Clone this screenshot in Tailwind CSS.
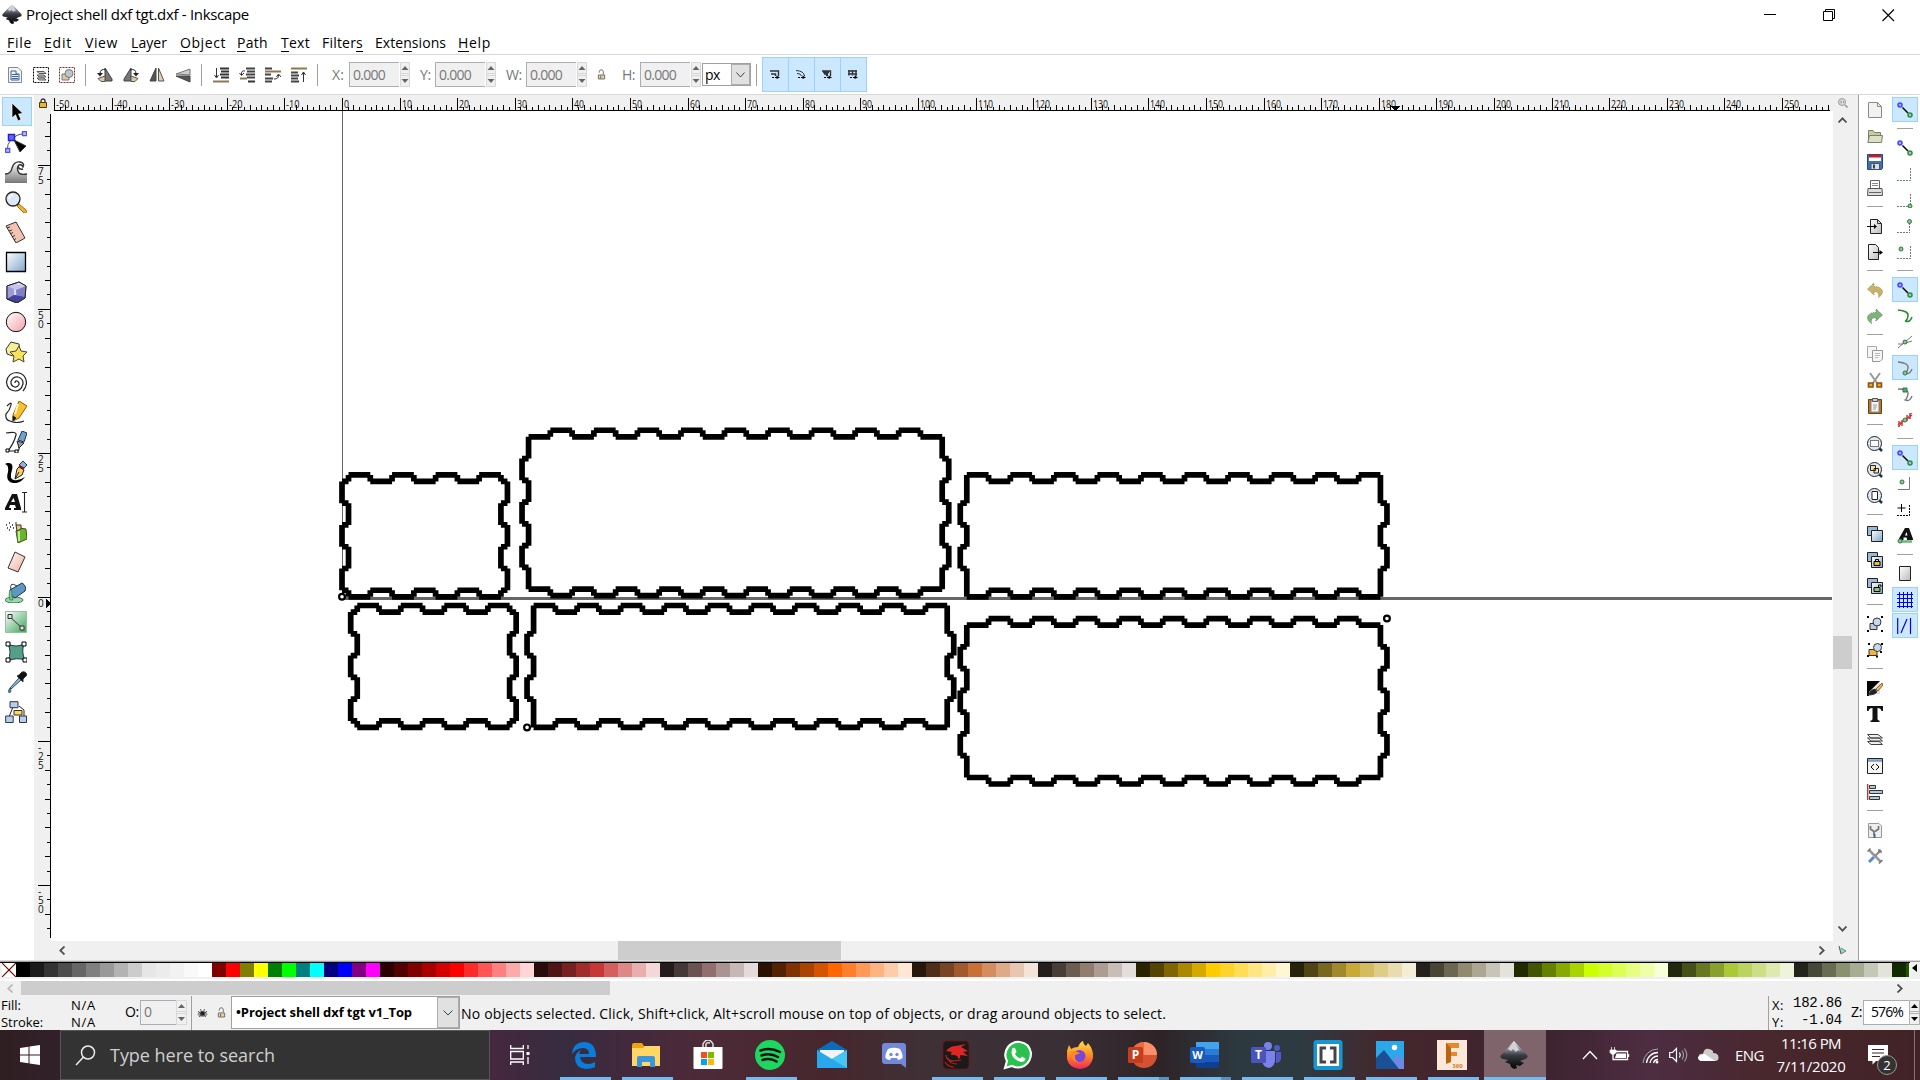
<!DOCTYPE html>
<html lang="en">
<head>
<meta charset="utf-8">
<title>Project shell dxf tgt.dxf - Inkscape</title>
<script src="https://cdn.jsdelivr.net/npm/@tailwindcss/browser@4"></script>
</head>
<body class="w-[1920px] h-[1080px] overflow-hidden bg-white text-black font-['Open_Sans','Noto_Sans',sans-serif] text-[14px] leading-none">
<svg class="absolute w-0 h-0">
  <linearGradient id="gBlue" x1="0" y1="0" x2="1" y2="1"><stop stop-color="#fff"/><stop offset="1" stop-color="#7fa6cc"/></linearGradient>
  <linearGradient id="gGrey" x1="0" y1="0" x2="1" y2="1"><stop stop-color="#fff"/><stop offset="1" stop-color="#bbb"/></linearGradient>
  <linearGradient id="gDark" x1="0" y1="0" x2="0" y2="1"><stop stop-color="#f4f4f8"/><stop offset=".5" stop-color="#3a3e44"/><stop offset="1" stop-color="#000"/></linearGradient>
  <linearGradient id="gPink" x1="0" y1="0" x2="1" y2="1"><stop stop-color="#fff"/><stop offset="1" stop-color="#f5a0aa"/></linearGradient>
  <linearGradient id="gPeach" x1="0" y1="0" x2="1" y2="1"><stop stop-color="#fff"/><stop offset="1" stop-color="#f0ab94"/></linearGradient>
  <linearGradient id="gGreen" x1="0" y1="0" x2="1" y2="1"><stop stop-color="#fff"/><stop offset="1" stop-color="#3fa25b"/></linearGradient>
  <linearGradient id="gWave" x1="0" y1="0" x2="0" y2="1"><stop stop-color="#fff"/><stop offset="1" stop-color="#777"/></linearGradient>
  <linearGradient id="gFox" x1="0" y1="0" x2="0" y2="1"><stop stop-color="#ffe14a"/><stop offset=".5" stop-color="#ff8a22"/><stop offset="1" stop-color="#f0285a"/></linearGradient>
  <symbol id="inkscape" viewBox="0 0 28 28"><path d="M14 0 1 14Q-1 17 3 18L8 19 5 21 10 23 11 26 14 28 17 27 16 24 20 25 24 22 20 20 25 18Q29 17 27 14Z" fill="url(#gDark)"/><path d="M14 1 8 8 11 10 13 8 16 11 18 9 20 10Z" fill="#cfd2d8"/></symbol>
  <symbol id="snap" viewBox="0 0 16 16"><path d="M5.500 5.500 11 11" stroke="#000" stroke-width="1.500"/><path d="M11.500 11.500V7.500L7.500 11.500Z"/><circle cx="3" cy="3" r="2" fill="#aaf" stroke="#44f" stroke-width="1.500"/><circle cx="13" cy="13" r="2" fill="#9cd0aa" stroke="#2b8a44" stroke-width="1.500"/></symbol>
  <symbol id="lock" viewBox="0 0 10 10"><path d="M3 5V3a2 2 0 0 1 4 0V5" fill="none" stroke="#333" stroke-width="1.300"/><path d="M1.500 4.500h7v5h-7z" fill="#e9b530" stroke="#4a3a10"/></symbol>
  <symbol id="unlock" viewBox="0 0 10 12"><path d="M2.500 4V3a2.200 2.200 0 0 1 4.500 0V6" fill="none" stroke="#666"/><path d="M1.500 6.500h7v4.500h-7z" fill="#e0d49a" stroke="#666"/><path d="M4 7.500v3" stroke="#666"/></symbol>
</svg>

<div class="flex flex-col h-[1080px]">
  <!-- title bar -->
  <header class="flex items-center h-[30px] shrink-0">
    <svg class="w-[20px] h-[20px] ml-[2px] -mt-[2px]"><use href="#inkscape"/></svg>
    <span class="ml-[4px] -mt-[2px] text-[15px] whitespace-nowrap" data-w="223">Project shell dxf tgt.dxf - Inkscape</span>
    <div class="ml-auto flex items-center gap-[46px] pr-[25px]">
      <svg class="w-[13px] h-[13px]" viewBox="0 0 13 13"><path d="M0 5.500H12" stroke="#000"/></svg>
      <svg class="w-[13px] h-[13px]" viewBox="0 0 13 13" fill="none" stroke="#000"><path d="M.5 2.500h9v9h-9zM2.500 2.500V.5h9v9h-2"/></svg>
      <svg class="w-[13px] h-[13px]" viewBox="0 0 13 13"><path d="M.5.5 12 12M12 .5.5 12" stroke="#000" stroke-width="1.100"/></svg>
    </div>
  </header>
  <nav id="menu" class="flex items-center h-[25px] shrink-0 pl-[7px] pt-[1px] border-b border-[#d9d9d9]"></nav>

  <!-- tool controls -->
  <div id="controls" class="flex items-center h-[40px] shrink-0 pl-[2px] border-b border-[#d9d9d9] text-[#777]"></div>

  <!-- work area -->
  <main class="flex h-[866px] shrink-0">
    <div id="tools" class="w-[34px] flex flex-col items-center pt-[2px] border-b border-[#d9d9d9]"></div>
    <div class="w-[1824px] flex flex-col bg-[#f0f0f0]">
      <div class="flex h-[16px]">
        <div class="w-[20px] flex justify-center pt-[3px]"><svg class="w-[10px] h-[10px] -ml-[2px]"><use href="#lock"/></svg></div>
        <svg id="hruler" class="w-[1779px] h-[16px]" viewBox="54 95 1779 16" shape-rendering="crispEdges"></svg>
        <svg class="w-[10px] h-[10px] mt-[3px] ml-[5px]" viewBox="0 0 10 10" fill="none" stroke="#999"><circle cx="4" cy="4" r="3.500" fill="#ddd"/><path d="M7 7 9.500 9.500" stroke-width="1.600"/><path d="M3 2.500v3M5.500 3v2"/></svg>
      </div>
      <div class="flex h-[830px]">
        <svg id="vruler" class="w-[17px] h-[830px]" viewBox="34 111 17 830" shape-rendering="crispEdges"></svg>
        <svg id="canvas" class="w-[1782px] h-[830px] bg-white" viewBox="51 111 1782 830"></svg>
        <div class="w-[19px] flex flex-col items-center">
          <svg class="w-[9px] h-[6px] mt-[6px]" viewBox="0 0 9 6"><path d="M.5 5.500 4.500 1.300 8.500 5.500" fill="none" stroke="#505050" stroke-width="1.800"/></svg>
          <div class="w-[19px] h-[33px] bg-[#cdcdcd] mt-[513px]"></div>
          <svg class="w-[9px] h-[6px] mt-[257px]" viewBox="0 0 9 6"><path d="M.5.5 4.500 4.700 8.500.5" fill="none" stroke="#505050" stroke-width="1.800"/></svg>
        </div>
      </div>
      <div class="flex items-center h-[19px] pl-[25px]">
        <svg class="w-[6px] h-[9px]" viewBox="0 0 6 9"><path d="M5.500.5 1.300 4.500 5.500 8.500" fill="none" stroke="#505050" stroke-width="1.800"/></svg>
        <div class="w-[223px] h-[19px] bg-[#cdcdcd] ml-[553px]"></div>
        <svg class="w-[6px] h-[9px] ml-[978px]" viewBox="0 0 6 9"><path d="M.5.5 4.700 4.500.5 8.500" fill="none" stroke="#505050" stroke-width="1.800"/></svg>
        <svg class="w-[9px] h-[9px] ml-[13px]" viewBox="0 0 9 9"><path d="M1 1 8 5 3 8Z" fill="#8db"/><path d="M1 0 3 8" stroke="#555"/><path d="M3 2 8 5" stroke="#4a8"/><path d="M3 8 8 5" stroke="#c57"/></svg>
      </div>
      <div class="h-px bg-[#dcdcdc]"></div>
    </div>
    <div class="w-[62px] flex border-l border-[#a0a0a0] border-b border-b-[#d9d9d9] pt-[2px]">
      <div id="cmds" class="w-[32px] flex flex-col items-center"></div>
      <div id="snaps" class="w-[28px] flex flex-col items-center"></div>
    </div>
  </main>

  <!-- palette -->
  <div class="flex h-[17px] shrink-0 bg-[#f0f0f0] border-t border-[#a0a0a0]">
    <div id="palette" class="flex w-[1910px] h-[15px] border-t border-black pl-[2px] overflow-hidden"></div>
    <svg class="w-[6px] h-[8px] mt-[2px] ml-[2px]" viewBox="0 0 6 8"><path d="M5 0V8L0 4Z"/></svg>
  </div>
  <div class="h-[3px] shrink-0 bg-white border-t border-[#f0f0f0]"></div>
  <div class="flex items-center h-[14px] shrink-0 bg-[#f0f0f0] pl-[7px]">
    <svg class="w-[6px] h-[9px]" viewBox="0 0 6 9"><path d="M5.500.5 1.300 4.500 5.500 8.500" fill="none" stroke="#bbb" stroke-width="1.800"/></svg>
    <div class="w-[589px] h-[14px] bg-[#cdcdcd] ml-[8px]"></div>
    <svg class="w-[6px] h-[9px] ml-[1287px]" viewBox="0 0 6 9"><path d="M.5.5 4.700 4.500.5 8.500" fill="none" stroke="#505050" stroke-width="1.800"/></svg>
  </div>

  <!-- status bar -->
  <div class="flex h-[35px] shrink-0 bg-[#f0f0f0] whitespace-nowrap">
    <div class="w-[124px] grid grid-cols-[70px_54px] grid-rows-[17px_17px] items-center pl-[1px] text-[13px] pt-[2px]">
      <span data-w="20">Fill:</span><span data-w="25">N/A</span><span data-w="42">Stroke:</span><span data-w="25">N/A</span>
    </div>
    <div class="w-[67px] flex items-center pb-[1px]">
      <span class="w-[16px] pl-[1px]"><span data-w="14">O:</span></span>
      <div class="w-[36px] h-[25px] border border-[#a9adb5] border-r-0 flex items-center pl-[3px] text-[#777]">0</div>
      <svg class="w-[11px] h-[25px]" viewBox="0 0 11 25"><path d="M.5.5h10v24H.5zM.5 11.500h10M.5 13.500h10" fill="#f0f0f0" stroke="#d8d8d8"/><path d="M2 8h7L5.500 4zM2 17h7L5.500 21z" fill="#666"/></svg>
    </div>
    <div class="w-px bg-[#a0a0a0] mt-[1px]"></div>
    <div class="w-[39px] flex items-center pl-[5px] gap-[8px]">
      <svg class="w-[11px] h-[10px]" viewBox="0 0 11 10"><ellipse cx="5.500" cy="6" rx="5" ry="3" fill="#999"/><circle cx="5.500" cy="5.500" r="2.300" fill="#222"/><path d="M1 3 3 5M3.500 1l1 3M7.500 1l-1 3M10 3 8 5M2 9 4 7M9 9 7 7" stroke="#444" stroke-width=".8"/></svg>
      <svg class="w-[9px] h-[11px] ml-[1px]"><use href="#unlock"/></svg>
    </div>
    <div class="w-[229px] h-[33px] mt-[1px] border border-[#a0a0a0] bg-white flex items-center">
      <span class="pl-[4px] w-[205px] font-bold text-[13px]"><span data-w="176">•Project shell dxf tgt v1_Top</span></span>
      <div class="w-[22px] h-[31px] bg-[#e1e1e1] border border-[#adadad] flex items-center justify-center"><svg class="w-[10px] h-[6px]" viewBox="0 0 10 6"><path d="M.5.5 5 5 9.500.5" fill="none" stroke="#444"/></svg></div>
    </div>
    <span class="w-[1309px] pl-[1px] pt-[12px]"><span data-w="705">No objects selected. Click, Shift+click, Alt+scroll mouse on top of objects, or drag around objects to select.</span></span>
    <div class="w-px bg-[#a0a0a0] -ml-[1px] mt-[1px]"></div>
    <div class="w-[73px] grid grid-cols-[20px_50px] grid-rows-[17px_17px] items-center pl-[3px] pt-[1px]">
      <span class="text-[13px] pt-[2px]"><span data-w="12">X:</span></span><span class="font-['Liberation_Mono',monospace] text-[14px] text-right -mt-[3px]"><span data-w="49">182.86</span></span>
      <span class="text-[13px] pt-[2px]"><span data-w="12">Y:</span></span><span class="font-['Liberation_Mono',monospace] text-[14px] text-right -mt-[3px]"><span data-w="41">-1.04</span></span>
    </div>
    <div class="flex items-center pl-[9px] pb-[1px]">
      <span class="w-[12px]"><span data-w="11">Z:</span></span>
      <div class="w-[46px] h-[25px] border border-[#a9adb5] border-r-0 bg-white flex items-center pl-[7px]"><span data-w="32">576%</span></div>
      <svg class="w-[11px] h-[25px]" viewBox="0 0 11 25"><path d="M.5.5h10v24H.5zM.5 11.500h10M.5 13.500h10" fill="#f0f0f0" stroke="#b0b0b0"/><path d="M2 8h7L5.500 4zM2 17h7L5.500 21z"/></svg>
    </div>
  </div>

  <!-- taskbar -->
  <footer class="flex h-[50px] shrink-0 text-white bg-[linear-gradient(90deg,#2f1f22_0px,#32202a_60px,#46273e_490px,#372c40_560px,#43293c_630px,#4c2a38_700px,#47272d_830px,#3d3136_930px,#3a2f35_1060px,#2e2428_1160px,#2d3940_1240px,#2e3a42_1300px,#45262c_1390px,#3e2430_1550px,#4d2d42_1650px,#48272d_1770px,#412327_1920px)]">
    <div class="w-[60px] flex items-center justify-center"><svg class="w-[20px] h-[20px]" viewBox="0 0 20 20" fill="#fff"><path d="M0 3 8.500 1.700V9.500H0zM9.500 1.600 20 0V9.500H9.500zM0 10.500H8.500V18.300L0 17zM9.500 10.500H20V20L9.500 18.400z"/></svg></div>
    <div class="w-[430px] bg-[#333] border border-[#565656] flex items-center pl-[14px]">
      <svg class="w-[21px] h-[21px]" viewBox="0 0 21 21" fill="none" stroke="#eee" stroke-width="1.500"><circle cx="13" cy="7.500" r="6.500"/><path d="M8.500 12 1 20"/></svg>
      <span class="ml-[14px] text-[18px] text-[#cfcfcf] whitespace-nowrap -mt-[1px]" data-w="165">Type here to search</span>
    </div>
    <div class="w-[64px] flex items-center pl-[20px]"><svg class="w-[20px] h-[20px]" viewBox="0 0 20 20" fill="none" stroke="#fff" stroke-width="1.300"><path d="M.7 0V3.500H13.300V0M.7 6.500H13.300V14H.7zM.7 20V17H13.300V20M18 0V4M18 12V19"/><path d="M16.500 7h3v3h-3z" fill="#fff" stroke="none"/></svg></div>
    <div id="apps" class="flex"></div>
    <div class="flex items-center w-[188px] pl-[36px]">
      <svg class="w-[16px] h-[10px]" viewBox="0 0 16 10"><path d="M1 9 8 1.500 15 9" fill="none" stroke="#fff" stroke-width="1.300"/></svg>
      <svg class="w-[21px] h-[16px] ml-[11px]" viewBox="0 0 21 16"><path d="M6.500 4.500h12v8H4V8M19.500 7v3" fill="none" stroke="#fff" stroke-width="1.300"/><path d="M7.500 6.500h9.500v4.500H6z" fill="#fff"/><path d="M1 3h6v2.500L5 7.500H3L1 5.500zM2.500 0V3M5.500 0V3" fill="#fff" stroke="#fff" stroke-width=".7"/></svg>
      <svg class="w-[17px] h-[17px] ml-[12px]" viewBox="0 0 17 17" fill="none" stroke="#fff"><path d="M1 16A15 15 0 0 1 16 2" stroke="#aaa"/><path d="M4.500 16A11.500 11.500 0 0 1 16 5.500M8 16A8 8 0 0 1 16 9M11.500 16A4.500 4.500 0 0 1 16 12.500" stroke-width="1.300"/><circle cx="15" cy="15" r="1.500" fill="#fff" stroke="none"/></svg>
      <svg class="w-[20px] h-[18px] ml-[10px]" viewBox="0 0 20 18" fill="none" stroke="#fff" stroke-width="1.200"><path d="M.7 6.500H3.500L7.500 2.500V15.500L3.500 11.500H.7zM10.500 6.500Q12 9 10.500 11.500"/><path d="M13 4.500Q16 9 13 13.500M15.500 2.500Q20 9 15.500 15.500" stroke="#999"/></svg>
      <svg class="w-[21px] h-[14px] ml-[9px]" viewBox="0 0 21 14"><path d="M5 13Q0 13 .5 9T5 6Q6 0 11 1T15 5Q20 5 20.500 9T17 13Z" fill="#ccc"/><path d="M0 9 6 5.500 17 13H4Q0 13 0 9Z" fill="#fff"/></svg>
    </div>
    <span class="w-[42px] pt-[18px] text-[15px] pl-[1px] -mr-[1px]"><span data-w="29">ENG</span></span>
    <div class="w-[72px] flex flex-col items-center gap-[8px] pt-[6px] text-[15px] whitespace-nowrap"><span data-w="60">11:16 PM</span><span data-w="69">7/11/2020</span></div>
    <div class="relative w-[68px] pl-[21px] pt-[15px] border-r border-[#8a7175]">
      <svg class="w-[20px] h-[20px]" viewBox="0 0 20 20"><path d="M0 0H20V16H8L4.500 19.500V16H0Z" fill="#fff"/><path d="M4 4.500H16M4 8H16M4 11.500H12" stroke="#412327" stroke-width="1.200"/></svg>
      <div class="absolute left-[30px] top-[25px] w-[20px] h-[20px] rounded-full bg-[#333] border border-[#999] flex items-center justify-center text-[13px]">2</div>
    </div>
  </footer>
</div>

<script>
const $ = id => document.getElementById(id);
const svg = (body, w = 16, cls = 'w-[16px] h-[16px]') => `<svg class="${cls}" viewBox="0 0 ${w} ${w}" fill="none" stroke="#333">${body}</svg>`;

// Menu: [before, mnemonic, after, text width, cell width class]
$('menu').innerHTML = [['','F','ile',25,'w-[37px]'],['','E','dit',28,'w-[41px]'],['','V','iew',33,'w-[46px]'],['','L','ayer',36,'w-[49px]'],['','O','bject',46,'w-[57px]'],['','P','ath',31,'w-[44px]'],['','T','ext',29,'w-[41px]'],['Filter','s','',41,'w-[53px]'],['Exte','n','sions',71,'w-[83px]'],['','H','elp',33,'w-[40px]']]
  .map(([a, m, b, w, c]) => `<span class="${c} shrink-0"><span data-w="${w}">${a}<u class="underline underline-offset-[3px]">${m}</u>${b}</span></span>`).join('');

// Tool controls bar
const sep = '<div class="w-[12px] pl-[5px]"><div class="w-px h-[22px] bg-[#a0a0a0]"></div></div>';
const bar = s => `<div class="w-[26px] flex justify-center">${svg(s)}</div>`;
const spin = '<svg class="w-[11px] h-[25px]" viewBox="0 0 11 25"><path d="M1.500.5h9v24h-9zM1.500 11.500h9M1.500 13.500h9" fill="#f0f0f0" stroke="#d8d8d8"/><path d="M2.500 8h7L6 4zM2.500 17h7L6 21z" fill="#666"/></svg>';
const field = (l, lw, cls) => `<span class="${cls}"><span data-w="${lw}">${l}:</span></span><div class="w-[50px] h-[25px] border border-r-0 border-[#a9adb5] bg-[#f0f0f0] flex items-center pl-[3px]"><span data-w="32">0.000</span></div>${spin}`;
const rows = 'M7 1.500h9M8 4.500h8M7 7.500h9M8 10.500h8';
$('controls').innerHTML =
  bar('<path d="M1.500.5H11L14.500 4V15.500H1.500Z" fill="#f4f4f4" stroke="#888"/><path d="M4 4h5v3h3v6H4zM5 7.500h6M5 9.500h6M5 11.500h6" stroke="#3465a4"/>') +
  bar('<path d="M.5.5h15v15H.5z" stroke="#000" stroke-dasharray="2 1"/><path d="M4 4.500h7l2 2H6zM4 8h7l2 2H6zM4 11h7l2 2H6z" fill="#ccc" stroke="#555"/>') +
  bar('<path d="M.5.5h15v15H.5z" stroke="#803030" stroke-dasharray="2 1"/><path d="M3 7h7v6H3z" fill="#ddc9a0" stroke="#777"/><circle cx="10" cy="6.500" r="4" fill="#bcc4cc" stroke="#777"/>') + sep +
  bar('<path d="M8 9V1L15 12V14H8Z" fill="#777" stroke="#444"/><path d="M1 11.500 8 9V14.500H4Z" fill="#dcc9a0" stroke="#555"/><path d="M9 3Q3 1 3 7" stroke="#222"/><path d="M0 6h6L3 9.500z" fill="#222" stroke="none"/>') +
  bar('<path d="M8 9V1L1 12V14H8Z" fill="#777" stroke="#444"/><path d="M15 11.500 8 9V14.500H12Z" fill="#dcc9a0" stroke="#555"/><path d="M7 3Q13 1 13 7" stroke="#222"/><path d="M10 6h6L13 9.500z" fill="#222" stroke="none"/>') +
  bar('<path d="M7 1V14H1Z" fill="#555" stroke="#444"/><path d="M9.500 1V14H15Z" fill="#e0cfa8" stroke="#555"/>') +
  bar('<path d="M15 2V8L1 7Z" fill="#ccc" stroke="#777"/><path d="M15 15V9L1 9Z" fill="#555" stroke="#444"/>') + sep +
  bar(`<path d="${rows}" stroke="#333" stroke-width="2"/><path d="M0 14.500H16" stroke="#8a7a50" stroke-width="2"/><path d="M3.500 1V10M1.500 8 3.500 11 5.500 8"/>`) +
  bar(`<path d="${rows}" stroke="#444" stroke-width="2"/><path d="M1 11.500H8" stroke="#8a7a50" stroke-width="2"/><path d="M9 14.500H16" stroke-width="2"/><path d="M6 4Q2 3 2.500 8M.5 6 2.500 8.500 5 6"/>`) +
  bar('<path d="M0 1.500h7M0 7.500h6M0 11.500h8M0 14.500h7" stroke="#444" stroke-width="2"/><path d="M0 4.500h16" stroke="#8a7a50" stroke-width="2"/><path d="M9 12Q14 12 13.500 8M11.500 10 13.500 7 16 10"/>') +
  bar('<path d="M0 1.500H16" stroke="#8a7a50" stroke-width="2"/><path d="M0 5.500h7M0 8.500h8M0 11.500h7M0 14.500h8" stroke="#444" stroke-width="2"/><path d="M12.500 15V5M10.500 8 12.500 5 14.500 8"/>') + sep +
  field('X', 12, 'w-[25px] pl-[8px]') + field('Y', 11, 'w-[25px] pl-[10px]') + field('W', 16, 'w-[30px] pl-[10px]') +
  '<div class="w-[28px] flex justify-center"><svg class="w-[9px] h-[11px]"><use href="#unlock"/></svg></div>' + field('H', 13, 'w-[25px] pl-[7px]') +
  '<div class="w-[49px] h-[23px] ml-[1px] border border-[#a0a0a0] bg-white flex text-black"><span class="w-[28px] pl-[2px] pt-[4px] text-[14px]"><span data-w="15">px</span></span><div class="w-[19px] h-[21px] bg-[#e1e1e1] border border-[#adadad] flex items-center justify-center"><svg class="w-[9px] h-[6px]" viewBox="0 0 9 6"><path d="M.5.5 4.500 5 8.500.5" fill="none" stroke="#444"/></svg></div></div>' +
  '<div class="w-[11px] pl-[5px]"><div class="w-px h-[22px] bg-[#a0a0a0]"></div></div>' +
  ['M0 1H8.500V6M1 4H5.500V6', 'M0 .5Q8 1 8.500 6M1 3.500Q5 3.500 5.500 6', 'M0 1H8.500V6M1 2.500H7M2 4H6M4 5.500H6', 'M0 1H9M0 4H9M1 0V5.500M4.500 0V5.500M8 0V6'].map((d, i) =>
    `<div class="w-[27px] h-[35px] -mr-[1px] border border-[#99d1ff] bg-[#cce8ff] flex items-center justify-center"><svg class="w-[10px] h-[9px] -mt-[1px] -ml-[2px]" viewBox="0 0 10 9" fill="none" stroke="#333" stroke-width="${i == 1 ? 1 : 1.4}"><path d="${d}"/><path d="M2 7.500H7" stroke="#000" stroke-width="1" stroke-dasharray="2 1"/><path d="M6.500 5.500V9L10 7.500Z" fill="#000" stroke="none"/></svg></div>`).join('');

// Toolbox, 22px icons
const tools = [
 '<path d="M7 2V17L10.500 13.800 13 20 16 18.500 13.500 13 18 12.500Z" fill="#000" stroke="#fff" stroke-width=".7"/>',
 '<path d="M2 20Q2 5 20 2" stroke="#555"/><path d="M.7 17.500h4v4h-4zM17.500.7h4v4h-4z" fill="#bbf" stroke="#55d" stroke-width="1.300"/><path d="M3.500 3.500h6v6h-6z" fill="#66f" stroke="#22c" stroke-width="1.500"/><path d="M9 9 21 15 15 21Z" fill="#000"/>',
 '<path d="M0 13Q6 13 7 7 9 0 15 1 20 2 18 6 17 3 14 4 11 7 14 12 16 14 22 13V22H0Z" fill="url(#gWave)" stroke="none"/><path d="M0 13Q6 13 7 7 9 0 15 1 20 2 18 6 17 3 14 4 11 7 14 12 16 14 22 13M13 6Q15 9 18 8" stroke="#333" stroke-width="1.400"/>',
 '<path d="M14 13 21 19Q23 22 19 22L12 15Z" fill="#f5b428" stroke="#a86a10"/><circle cx="8" cy="8" r="7" fill="#dce9f5" stroke="#222" stroke-width="1.300"/><path d="M4 8Q4 4 8 4" stroke="#fff" stroke-width="1.500"/>',
 '<path d="M1 5 11 1 20 17 11 22Z" fill="#f3c3b2" stroke="#333"/><path d="M2 7 5 6M4 10 7 9M5 13 8 11.500M7 16 10 14.500M9 19 11 17.500" stroke="#333"/>',
 '<path d="M1.500 1.500h19v19h-19z" fill="url(#gBlue)" stroke="#000" stroke-width="1.300"/>',
 '<path d="M2 5 14 1 21 5 20 17 12 22 2 18Z" fill="#6d6dbd" stroke="#222"/><path d="M2 5 9 3V14L2 18Z" fill="#9c9cd8" stroke="none"/><path d="M9 3 14 1 21 5 20 14 9 14Z" fill="#dcdcf6" stroke="none"/><path d="M2 5 9 3 21 5 11 9Z" fill="#c4c4ec" stroke="none"/><path d="M11 9 21 5 20 17 12 22Z" fill="#8080c8" stroke="none"/><path d="M2 18 9 14 20 16 12 22Z" fill="#44449a" stroke="none"/><path d="M2 5 14 1 21 5 20 17 12 22 2 18Z" stroke="#222"/>',
 '<circle cx="11" cy="11" r="9.700" fill="url(#gPink)" stroke="#111"/>',
 '<path d="M1 8 6 1 14 3 15 11 8 15 2 13Z" fill="#f6ef9a" stroke="#333"/><path d="M14 5 16 10 22 11 18 15 19 21 14 18 8 21 9 15 5 11 11 10Z" fill="#fae25a" stroke="#443"/>',
 '<path d="M10 12Q10 9.500 12 10 14.500 11 14 13.500 12.500 16.500 9.500 16 5.500 14.500 6 10.500 8 5.500 13 6 18.500 7.500 18 13 16 20 10 20 2 19 1.500 11 3 1.500 12 1.500 21 2.500 21.500 12 21 17 18 20" stroke="#222" stroke-width="1.200"/>',
 '<path d="M2 5Q7 0 6 4 5 9 1 13 0 19 5 20 12 23 19 20" stroke="#222" stroke-width="1.200"/><path d="M8 14 14 0 22 5 14 17 8 20Z" fill="#f7c12f" stroke="#8a5a0a"/><path d="M8 15 11 17 8 20Z"  fill="#000"/><path d="M13 3 10 13" stroke="#fff6c0" stroke-width="2"/>',
 '<path d="M1 2Q12 0 11 4 9 12 3 20H11Q15 21 14 14" stroke="#222" stroke-width="1.200"/><path d="M13 9 17 0 22 2 19 11Z" fill="#6fa1cf" stroke="#234"/><path d="M12 10 19 12 14 17Z" fill="#99a" stroke="#222"/><path d="M1 18h3v3H1zM10 19h3v3h-3z" fill="#fff" stroke="#000"/>',
 '<path d="M2 2Q9 1 7 9 4 18 9 19 14 20 20 16 15 23 8 22 0 20 3 11 4 4 0 3Z" fill="#000" stroke="none"/><path d="M14 4 18 0 22 4 19 7Z" fill="#89b6e0" stroke="#234"/><path d="M14 5 19 8" stroke="#c00" stroke-width="2"/><path d="M10 18 12 8 14 6 19 9 17 14Z" fill="#f5ce6a" stroke="#222"/><path d="M10 18 14 11" stroke="#222"/>',
 '<path d="M0 19V17L7 3H12L16 17V19H9V17H11L10 14H5L4 17H6V19ZM6 11H10L8.500 7Z" fill="#111" stroke="none"/><path d="M17 1.500H22M19.500 2V21M17 21H22" stroke="#222" stroke-width="1.100"/>',
 '<path d="M1 4h1M4 2h1M7 4h1M2 7h1M5 6h1M8 7h1M4 9h1" stroke="#222" stroke-width="1.600"/><path d="M11 10 15 7 21 8 22 18 13 22Z" fill="#6cb42c" stroke="#3a5a1a"/><path d="M14 10V20" stroke="#c5ec90" stroke-width="2"/><path d="M11 4h5v4l-4 2zM11 4V1" fill="#edc87d" stroke="#333"/>',
 '<path d="M10 1 20 6 13 21 3 17Z" fill="url(#gPeach)" stroke="#333"/>',
 '<ellipse cx="9" cy="19" rx="9" ry="3" fill="#9ad8a8" stroke="#375"/><path d="M5 9 17 2Q22 5 20 10L10 17Q5 15 5 9Z" fill="#5f97c4" stroke="#234"/><path d="M5 9Q3 14 5 19H8Q6 14 7 10Z" fill="#79c88a" stroke="#375" stroke-width=".7"/><path d="M6 9Q4 0 12 5" stroke="#333"/>',
 '<path d="M.5.5h21v21H.5z" fill="url(#gGreen)" stroke="#8cc49c"/><path d="M4 5 17 17" stroke="#333"/><path d="M3 3.500h4v4H3zM15 15h4v4h-4z" fill="#ddd" stroke="#333"/>',
 '<path d="M3 3Q11 7 19 3 16 11 20 19 11 16 3 20 7 11 3 3Z" fill="#559f86" stroke="#235"/><path d="M1 1h4v4H1zM17 1h4v4h-4zM1 17h4v4H1zM18 17h4v4h-4z" fill="#fff" stroke="#000"/>',
 '<path d="M14 7 5 17 6 18 16 9Z" fill="#8fc0e8" stroke="#345"/><path d="M12 5 14 4 17 1Q21 0 22 4L18 8 18 11Z" fill="#111"/><path d="M5 17Q2 21 4.500 22 7 21 5 17Z" fill="#3b84c0" stroke="#245" stroke-width=".7"/>',
 '<path d="M8 6 4 16M14 5 19 9V16" stroke="#222"/><path d="M5 .7h8v6H5zM.7 15h7.500v6.500H.7zM14.500 15H21.500v6.500H14.500z" fill="#b5d0ec" stroke="#334"/><path d="M9 9.500h8v4.500H9z" fill="#ffda55" stroke="#333"/>'
];
$('tools').innerHTML = tools.map((t, i) => `<div class="${i ? 'w-[30px] h-[30px] pr-[2px] flex items-center justify-center' : 'w-[30px] h-[29px] mb-[1px] pr-[2px] flex items-center justify-center bg-[#cce8ff] border border-[#99d1ff]'}">${svg(t, 22, 'w-[22px] h-[22px]')}</div>`).join('');

// Right-hand bars; '-' is a separator, '*' in front marks a pressed button
const page = '<path d="M3.500 1.500H10.500L14.500 5.500V15.500H3.500Z" fill="url(#gGrey)" stroke="#222"/><path d="M10.500 1.500V5.500H14.500"/>';
const zoom = b => '<path d="M12 12 15 15" stroke-width="2.500" stroke="#234"/><circle cx="7.500" cy="7.500" r="7" fill="#dfeaf6" stroke="#222"/>' + b;
const two = '<path d="M.5.5h10v9H.5z" fill="#9ab8d8" stroke="#222"/><path d="M4.500 4.500h11v11h-11z" fill="url(#gBlue)" stroke="#222"/>';
const cmds = [
 '<path d="M1.500.5H10.500L14.500 4.500V15.500H1.500Z" fill="#f2f2ee" stroke="#888"/><path d="M10.500.5V4.500H14.500" stroke="#888"/>',
 '<path d="M1.500 13.500V2.500H6L7.500 4.500H13.500V7" fill="#c5cba5" stroke="#7b8060"/><path d="M.8 14.500 2.500 7.500H15.500L14.500 14.500Z" fill="#dde0c6" stroke="#7b8060"/>',
 '<path d="M.5.5h15v14l-1 1H.5z" fill="#3f70b5" stroke="#234a84"/><path d="M2 1h12v6H2z" fill="#fff" stroke="none"/><path d="M2 1h12v2.500H2z" fill="#d11" stroke="none"/><path d="M4 9.500h8.500v6H4z" fill="#ddd" stroke="#456"/><path d="M6 10.500h2v4H6z" fill="#345" stroke="none"/>',
 '<path d="M3.500 8V.5H12.500V8" fill="#fff" stroke="#666"/><path d="M5 3.500H11M5 5.500H11" stroke="#888"/><path d="M1 8.500H15L15.500 15.500H.5Z" fill="#ddd" stroke="#555"/><path d="M2 12.500H14" stroke="#666"/>', '-',
 page + '<path d="M0 8.500H9" stroke="#000"/><path d="M7 6V11L10 8.500Z" fill="#000" stroke="none"/>',
 '<path d="M1.500.5H8.500L11.500 3.500V15.500H1.500Z" fill="url(#gGrey)" stroke="#222"/><path d="M6 8.500H14" stroke="#000"/><path d="M12.500 6V11L16 8.500Z" fill="#000" stroke="none"/>', '-',
 '<path d="M.5 7 7 1V4.500Q14 4.500 15.500 9 15.500 13 11.500 15.500 13 9.500 7 9.500V13Z" fill="#c6b36c" stroke="#97854a" stroke-dasharray="1 1"/>',
 '<path d="M15.500 7 9 1V4.500Q2 4.500 .5 9 .5 13 4.500 15.500 3 9.500 9 9.500V13Z" fill="#7fb27c" stroke="#4d8549" stroke-dasharray="1 1"/>', '-',
 '<path d="M.5.5h9v11h-9z" fill="#f5f5f5" stroke="#aaa"/><path d="M5.500 4.500h10V13L13 15.500H5.500Z" fill="#f5f5f5" stroke="#999"/><path d="M8 7.500h5M8 9.500h5M8 11.500h3" stroke="#bbb"/>',
 '<path d="M3 1 10 11M13 1 6 11" stroke="#999" stroke-width="2"/><path d="M1.500 11h4.500v4H1.500zM10 11h4.500v4H10z" fill="#e8a838" stroke="#8a5208" stroke-width="1.600"/>',
 '<path d="M1.500 1.500h13v14h-13z" fill="#b3752d" stroke="#6c420e"/><path d="M4 3h8v11H4z" fill="#f5f5f5" stroke="#888"/><path d="M5.500.5h5v3h-5z" fill="#ccc" stroke="#555"/><path d="M6 7h4M6 9h4M6 11h3" stroke="#999"/>', '-',
 zoom('<path d="M3.500 4.500h8v6h-8z" fill="#fff" stroke="#000" stroke-dasharray="1 1"/>'),
 zoom('<path d="M3.500 3.500h5v5h-5zM7 6.500h4.500v4.500H7z" fill="#fbe19a" stroke="#222"/>'),
 zoom('<path d="M5 3.500h5.500v8H5z" fill="#fff" stroke="#222"/>'), '-',
 two, two + '<path d="M7 9.500h6v4H7z" fill="#f5b233" stroke="#000"/><path d="M8.500 9V7.500h3V9" stroke="#000"/>', two + '<path d="M7 9.500h6v4H7z" fill="#8cc07c" stroke="#000"/><path d="M11.500 9V7h2.500v2" stroke="#000"/>', '-',
 '<path d="M0 1h2M14 1h2M0 15h2M14 15h2" stroke="#000" stroke-width="2"/><path d="M3 7.500h7v6H3z" fill="#b8cde4"/><circle cx="10" cy="6" r="4" fill="#c8d9ec"/>',
 '<path d="M1 2h2M14 2h2M0 14h2M9 14.500h2M13 10h2" stroke="#000" stroke-width="2"/><path d="M2 7.500h8v6H2z" fill="#f5b233"/><circle cx="10.500" cy="5.500" r="4" fill="#c8d9ec"/>', '-',
 '<path d="M0 1H13L2 12V16H0Z" fill="#000" stroke="none"/><path d="M2 14 13 2V14Z" fill="#ddd" stroke="none"/><path d="M1 15Q4 9 8 9L10 12Q8 15 1 15Z" fill="#222"/><path d="M9 9 15 3 16 5 11 11Z" fill="#edbc35" stroke="#855"/>',
 '<path d="M0 0H16V5H14.500Q14 2 10.500 2V13Q10.500 14.500 12.500 14.500V16H3.500V14.500Q5.500 14.500 5.500 13V2Q2 2 1.500 5H0Z" fill="#111" stroke="none"/>',
 '<path d="M.5 9.500 4 12.500H15.500L12 9.500ZM.5 6 4 9H15.500L12 6ZM.5 2.500H11L15.500 6H4Z" fill="#eee" stroke="#444"/>',
 '<path d="M.5.5h15v15H.5z" fill="#f4f4f0" stroke="#222"/><path d="M1 2.500h14" stroke="#7b9ac4" stroke-width="2.500"/><path d="M7 6 4 9 7 12M9 6 12 9 9 12" stroke="#111"/>',
 '<path d="M.7 0V16" stroke="#c22" stroke-width="1.300"/><path d="M2.500 1.500h6v3h-6zM2.500 6.500h13v3h-13zM2.500 12.500h10v3h-10z" fill="#b0c8e0" stroke="#333"/>', '-',
 '<path d="M1.500 1.500H12L14.500 4V15.500H1.500Z" fill="#eee" stroke="#999"/><path d="M3.500 4V7L7 9.500V13M11.500 4V7L8 9.500" stroke="#777" stroke-width="1.800"/><path d="M7.500 12V16" stroke="#3465a4" stroke-width="2"/>',
 '<path d="M2 2 14 14" stroke="#999" stroke-width="2.500"/><path d="M14 2 8 8" stroke="#888" stroke-width="2"/><path d="M7 9 2 14" stroke="#5b8cc6" stroke-width="3"/><path d="M.5 3.500 3.500.5M12 15.500 15.500 12M12 1v3h3" stroke="#777" stroke-width="1.500"/>'
];
const use = '<use href="#snap" stroke="none"/>', dot = (x, y) => `<circle cx="${x}" cy="${y}" r="2" fill="#8cc49c" stroke="#2b7a3c"/>`;
const dash = (d, c = '#777') => `<path d="${d}" stroke="${c}" stroke-dasharray="2 1"/>`;
const snaps = ['*' + use, '-', use, dash('M0 14.500H13.500V1', '#5d8d60'), dash('M0 14.500H13.500V1') + dot(13, 14), dash('M0 14.500H13M12.500 13V3') + dot(12.5, 3.5), dash('M0 14.500H13.500V1') + dot(4, 5), '-',
 '*' + use, '<path d="M1 2Q12 3 11 8T8 13Q13 15 15 9" stroke="#2b8a34" stroke-width="1.500"/>', '<path d="M1 14 15 2M1 10H5L15 7" stroke="#777"/>' + dot(8, 8),
 '*<path d="M1 2Q12 3 11 8T8 13Q13 15 15 9" stroke="#777" stroke-width="1.300"/>' + dot(8, 13), '<path d="M1 3Q12 3 11 8T8 14Q13 16 15 10" stroke="#777" stroke-width="1.300"/><path d="M6 2h4v4H6z" fill="#5aa36a" stroke="#2b7a3c"/>',
 '<path d="M1 15 15 1" stroke="#777"/><path d="M2 9V15M5 8V14M10 3V9M13 1V7M1 13 6 9M10 7 15 3" stroke="#d33" stroke-width="1.500"/>' + dot(8, 8), '-',
 '*' + use, '<path d="M1 13.500H12.500V1" stroke="#777"/>' + dot(5, 6), '<path d="M4.500 2V10M.5 6H8.500" stroke="#000"/><path d="M0 13.500H12.500V2" stroke="#000" stroke-dasharray="2 1"/>',
 '<path d="M2 12V10.500L8 0H12L16 11V12H10V11L9.500 9.500H6.500V12ZM8 7.500H10.500L9.500 4Z" fill="#111" stroke="none"/><path d="M2 13.500H15" stroke="#6bb87b" stroke-width="2.500"/>' + dot(3, 13), '-',
 '<path d="M2.500.5h11v14h-11z" fill="url(#gGrey)" stroke="#222"/>', '*<path d="M0 2.500H16M0 6.500H16M0 10.500H16M0 14.500H16M2.500 0V16M6.500 0V16M10.500 0V16M14.500 0V16" stroke="#00f"/>', '*<path d="M.7 0V16M13.500 0V16M4 15 10 1" stroke="#00f" stroke-width="1.200"/>'];
const column = list => list.map(s => s === '-' ? '<div class="w-[16px] h-[12px] pt-[5px]"><div class="h-px bg-[#a0a0a0]"></div></div>'
  : s[0] === '*' ? `<div class="w-[26px] h-[25px] mb-[1px] flex items-center justify-center bg-[#cce8ff] border border-[#99d1ff]">${svg(s.slice(1))}</div>`
  : `<div class="w-[26px] h-[26px] flex items-center justify-center">${svg(s)}</div>`).join('');
$('cmds').innerHTML = column(cmds);
$('snaps').innerHTML = column(snaps);

// Rulers: one unit is 5.76px
const text = (x, y, s, w) => `<text x="${x}" y="${y}" font-size="10" fill="#111" stroke="none"${w ? ` textLength="${w}" lengthAdjust="spacingAndGlyphs"` : ''}>${s}</text>`;
let h = '<path d="M54 110.500H1830" stroke="#000"/>', d = '';
for (let i = -50; i <= 258; i++) {
  const x = Math.floor(342.4 + i * 5.76) + .5;
  if (x > 1830) break;
  d += `M${x} ${i % 10 === 0 ? 98 : i % 2 === 0 ? 105 : 107}V110`;
  if (i % 10 === 0) h += text(x + 1.5, 107.5, i, String(Math.abs(i)).length * 5 + (i < 0 ? 3.5 : 0));
}
$('hruler').innerHTML = h + `<path d="${d}" stroke="#000"/><path d="M1390 106H1400L1395 111Z"/>`;
let v = '<path d="M50.500 114V938" stroke="#000"/>'; d = '';
for (let i = -33; i <= 23; i++) {
  const y = Math.floor(597.4 + i * 14.4) + .5;
  d += `M${i % 10 === 0 ? 38 : i % 2 === 0 ? 45 : 47} ${y}H50`;
  if (i % 10 === 0) String(-i * 2.5).split('').forEach((c, k) => v += text(38, y + 9 + k * 9, c));
}
$('vruler').innerHTML = v + `<path d="${d}" stroke="#000"/><path d="M46 599V608L51 603.500Z"/>`;

// Drawing: finger-jointed panels in millimetres, every edge a separate line
const X = mm => (342 + mm * 2.177).toFixed(2), Y = mm => (596.8 + mm * 2.177).toFixed(2);
let lines = '';
const poly = p => { for (let i = 1; i < p.length; i++) lines += `M${X(p[i-1][0])} ${Y(p[i-1][1])}L${X(p[i][0])} ${Y(p[i][1])}`; };
// runs along one side through the cuts, alternating between offsets o1 and o2
const side = (cuts, o1, o2, vert) => {
  const p = [];
  for (let i = 1; i < cuts.length; i++) { const o = i % 2 ? o1 : o2; p.push([cuts[i-1], o], [cuts[i], o]); }
  poly(vert ? p.map(([a, b]) => [b, a]) : p);
};
const range = (a, n) => Array.from({length: n + 1}, (_, i) => a + i * 10);
function small(x, y) {
  side(range(x + 3, 7), y - 56, y - 53); side(range(x + 3, 7), y, y - 3);
  side(range(y - 53, 5), x, x + 3, true); side(range(y - 53, 5), x + 76, x + 73, true);
  for (const [a, b] of [[x, x + 3], [x + 76, x + 73]]) { poly([[a, y - 53], [b, y - 53], [b, y - 56]]); poly([[a, y - 3], [b, y - 3], [b, y]]); }
}
function strip(x, y) {
  side(range(x, 19), y - 56, y - 53); side(range(x, 19), y, y - 3);
  const c = [y - 56, y - 43, y - 33, y - 23, y - 13, y];
  side(c, x, x - 3, true); side(c, x + 190, x + 193, true);
}
function big(x, y) {
  side(range(x, 19), y, y - 3); side(range(x, 19), y + 70, y + 73);
  side(range(y, 7), x, x - 3, true); side(range(y, 7), x + 190, x + 193, true);
}
small(0, 0); small(4, 60); big(85.7, -73.5); strip(287, 0); strip(88, 60); big(287, 13);
$('canvas').innerHTML = '<path d="M342.500 111V598" stroke="#666"/><path d="M342 598.500H1832" stroke="#666" stroke-width="3"/>' +
  `<path d="${lines}" stroke="#000" stroke-width="5.700" fill="none"/>` +
  [[0, 0], [85, 60], [480, 10]].map(([x, y]) => `<circle cx="${X(x)}" cy="${Y(y)}" r="2.900" fill="#fff" stroke="#000" stroke-width="2.200"/>`).join('');

// Palette
const colors = '000000 1a1a1a 333333 4d4d4d 666666 808080 999999 b3b3b3 cccccc e6e6e6 ececec f2f2f2 f9f9f9 ffffff 800000 ff0000 808000 ffff00 008000 00ff00 008080 00ffff 000080 0000ff 800080 ff00ff 2b0000 550000 800000 aa0000 d40000 ff0000 ff2a2a ff5555 ff8080 ffaaaa ffd5d5 280b0b 501616 782121 a02c2c c83737 d35f5f de8787 e9afaf f4d7d7 241c1c 483737 6c5353 916f6f ac9393 c8b7b7 e3dbdb 2b1100 552200 803300 aa4400 d45500 ff6600 ff7f2a ff9955 ffb380 ffccaa ffe6d5 28170b 502d16 784421 a05a2c c87137 d38d5f deaa87 e9c6af f4e3d7 241f1c 483e37 6c5d53 917c6f ac9d93 c8beb7 e3dedb 2b2200 554400 806600 aa8800 d4aa00 ffcc00 ffd42a ffdd55 ffe680 ffeeaa fff6d5 28220b 504416 786721 a0892c c8ab37 d3bc5f decd87 e9ddaf f4eed7 24221c 484537 6c6753 918a6f aca793 c8c4b7 e3e2db 222b00 445500 668000 88aa00 aad400 ccff00 d4ff2a ddff55 e5ff80 eeffaa f6ffd5 22280b 445016 677821 89a02c abc837 bcd35f cdde87 dde9af eef4d7 22241c 454837 676c53 8a916f a7ac93 c4c8b7 e2e3db 112b00 225500'.split(' ');
$('palette').innerHTML = '<svg class="w-[14px] h-[14px] shrink-0 bg-white" viewBox="0 0 14 14"><path d="M0 0 14 14M14 0 0 14" stroke="#700" stroke-width="1.200"/></svg>' +
  colors.slice(0, -1).map(c => `<div class="w-[14px] h-[14px] shrink-0" style="background:#${c}"></div>`).join('') + '<div class="w-[3px] h-[14px] bg-[#225500]"></div>';

// Taskbar apps: [icon, state] (0 idle, 1 running, 2 several windows, 3 active)
const letter = (c, x, y, s, f) => `<text x="${x}" y="${y}" font-size="${s}" font-weight="700" fill="${f}" stroke="none" text-anchor="middle">${c}</text>`;
const apps = [
 ['<path d="M3 14Q4 2 16 2 27 3 27 17H11Q12 24 19 24 23 24 26 22V27Q22 29 17 29 6 28 6 18 7 12 13 9 10 11 10.500 14H20Q20 8 14 8 7 8 3 14Z" fill="#0a7ddb" stroke="none"/>', 1],
 ['<path d="M1 5Q1 3 3 3H11L13 6H29V25H1Z" fill="#f0a30a" stroke="none"/><path d="M1 8H12L14 6H29V26H1Z" fill="#ffd766" stroke="none"/><path d="M6 27V18Q6 16 8 16H22Q24 16 24 18V27H19V22H11V27Z" fill="#3a96dd" stroke="none"/>', 1],
 ['<path d="M10 8V4Q12 0 15 0 18 0 20 4V8M13 8V4Q14 2 17 3" stroke="#ddd" stroke-width="1.500"/><path d="M.5 7H29.500V28Q29.500 29 28.500 29H1.500Q.5 29 .5 28Z" fill="#fff" stroke="none"/><path d="M8 12h6v6H8z" fill="#f25022" stroke="none"/><path d="M15 12h6v6h-6z" fill="#7fba00" stroke="none"/><path d="M8 19h6v6H8z" fill="#00a4ef" stroke="none"/><path d="M15 19h6v6h-6z" fill="#ffb900" stroke="none"/>', 0],
 ['<circle cx="15" cy="15" r="15" fill="#1ed760" stroke="none"/><path d="M5.500 10.500Q15 7 25 12M6.500 15.500Q15 12.500 23 17M7.500 20Q15 17.500 21.500 21.500" stroke="#111" stroke-width="2.500" stroke-linecap="round"/>', 1],
 ['<path d="M0 10 15 1 30 10V28H0Z" fill="#0a6cbd" stroke="none"/><path d="M3 10H27V20H3Z" fill="#f3f3f3" stroke="none"/><path d="M0 10 15 19 30 10V28H0Z" fill="#28a8ea" stroke="none"/><path d="M30 10V28L15 19Z" fill="#45c6f4" stroke="none"/>', 0],
 ['<path d="M6 3H24Q27 3 27 6V28L22 24H6Q3 24 3 21V6Q3 3 6 3Z" fill="#7289da" stroke="none"/><path d="M9 9Q15 6.500 21 9 24 14 23.500 18 21 20 19 20L18 18H12L11 20Q8 20 6.500 18 6 14 9 9Z" fill="#fff" stroke="none"/><circle cx="12" cy="14.500" r="1.700" fill="#7289da" stroke="none"/><circle cx="18" cy="14.500" r="1.700" fill="#7289da" stroke="none"/>', 0],
 ['<path d="M4 1H26L28 4V27L25 29H4L2 26V4Z" fill="#1a1a1a" stroke="#7a1018" stroke-width=".8"/><path d="M5 11Q9 6 15 6L25 4 20 7 27 11 22 12 27 16 19 15Q20 18 17 19 18 15 12 15 8 15 11 12Z" fill="#e02525" stroke="none"/><path d="M5 15Q5 21 13 21L20 20M7 18Q8 24 16 24M4 22Q7 27 13 27" stroke="#c41e1e" stroke-width="1.100"/>', 1],
 ['<path d="M2 28 4 21Q0 14 5 7 10 1 17 2 26 3 28 13 28 22 21 26 15 29 9 26Z" fill="#29c24e" stroke="#fff" stroke-width="2.200"/><path d="M9 9Q11 6.500 12.500 9L13.500 12 12 14Q14 17.500 17 18.500L19 16.500 22.500 18.500Q22 22 18 22 10 20 8.500 13Z" fill="#fff" stroke="none"/>', 1],
 ['<path d="M2 11 4 5 6 9Q9 7 13 7 15 2 18 1 18 4 21 6L23 3Q29 10 28 18 26 28 15 29 4 28 2 19Z" fill="url(#gFox)" stroke="none"/><circle cx="14.500" cy="16" r="6" fill="#7a45d8" stroke="none"/><path d="M6 12Q10 10 15 13 12 15 10 15 9 21 15 23 6 22 6 12Z" fill="#ff8a22" stroke="none"/>', 1],
 ['<circle cx="17" cy="15" r="13" fill="#d35230" stroke="none"/><path d="M17 2A13 13 0 0 1 30 15H17Z" fill="#ff8f6b" stroke="none"/><path d="M4 15A13 13 0 0 1 17 2V15Z" fill="#ed6c47" stroke="none"/><rect x="1" y="7" width="15" height="16" rx="1.500" fill="#c43e1c" stroke="none"/>' + letter('P', 8.500, 19, 12, '#fff'), 2],
 ['<path d="M7 2H30V9H7Z" fill="#41a5ee" stroke="none"/><path d="M7 9H30V15H7Z" fill="#2b7cd3" stroke="none"/><path d="M7 15H30V22H7Z" fill="#185abd" stroke="none"/><path d="M7 22H30V28H7Z" fill="#103f91" stroke="none"/><rect x="1" y="7" width="15" height="16" rx="1.500" fill="#185abd" stroke="none"/>' + letter('W', 8.500, 19, 11, '#fff'), 2],
 ['<circle cx="17" cy="6" r="4" fill="#7b83eb" stroke="none"/><circle cx="26" cy="8" r="3" fill="#5059c9" stroke="none"/><path d="M11 11H24V21Q23 27 18 28 12 27 11 21Z" fill="#7b83eb" stroke="none"/><path d="M25 12H30V19Q29 23 25 23Z" fill="#5059c9" stroke="none"/><rect x="0" y="7" width="15" height="16" rx="1.500" fill="#4b53bc" stroke="none"/>' + letter('T', 7.500, 19, 12, '#fff'), 1],
 ['<rect x=".5" y="0" width="29" height="30" rx="3" fill="#1597d4" stroke="none"/><rect x="4" y="4" width="22" height="22" fill="#fff" stroke="none"/><path d="M13 8H8V22H13M17 8H22V22H17" stroke="#444" stroke-width="3"/>', 1],
 ['<rect x="1" y="1" width="28" height="28" fill="#29a9ea" stroke="none"/><path d="M14 29 22 14 29 20V29Z" fill="#6c8ae4" stroke="none"/><path d="M1 18 9 10 24 29H1Z" fill="#1b4f96" stroke="none"/><circle cx="19.500" cy="7.500" r="2.700" fill="#fff" stroke="none"/>', 1],
 ['<rect x="0" y="0" width="30" height="30" fill="#fbe8d8" stroke="none"/><path d="M9 3H22V8H14V12H20V16H14V22H9Z" fill="#e38a2a" stroke="none"/><path d="M9 3 14 8V22L9 24Z" fill="#b86412" stroke="none"/>' + letter('360', 20.500, 28, 6, '#d87a2a'), 1],
 ['<use href="#inkscape" stroke="none" x="1" y="1" width="28" height="28"/>', 3]
];
$('apps').innerHTML = apps.map(([s, st]) => `<div class="${st === 3 ? 'w-[62px] h-[50px] flex flex-col items-center pt-[10px] bg-[#7f656b]' : 'w-[62px] h-[50px] flex flex-col items-center pt-[10px]'}">${svg(s, 30, 'w-[30px] h-[30px] -ml-[2px]')}${
  st ? `<div class="${st === 3 ? 'w-[62px] h-[3px] mt-[7px] bg-[#76b9ed]' : 'w-[51px] h-[3px] mt-[7px] bg-[#76b9ed] flex justify-end'}">${st === 2 ? '<div class="w-[10px] h-[3px] bg-[#5a8fba]"></div>' : ''}</div>` : ''}</div>`).join('');

// Even out label widths whichever UI font is available
function fit() {
  document.querySelectorAll('[data-w]').forEach(e => {
    e.classList.add('inline-block', 'whitespace-nowrap', 'justify-self-start', 'shrink-0');
    const r = document.createRange(); r.selectNodeContents(e);
    let ls = 0;
    for (let k = 0; k < 4; k++) {
      e.style.letterSpacing = ls.toFixed(3) + 'px';
      ls += (e.dataset.w - r.getBoundingClientRect().width) / e.textContent.length;
    }
  });
}
fit();
document.fonts.ready.then(fit);
addEventListener('load', fit);
</script>
</body>
</html>
